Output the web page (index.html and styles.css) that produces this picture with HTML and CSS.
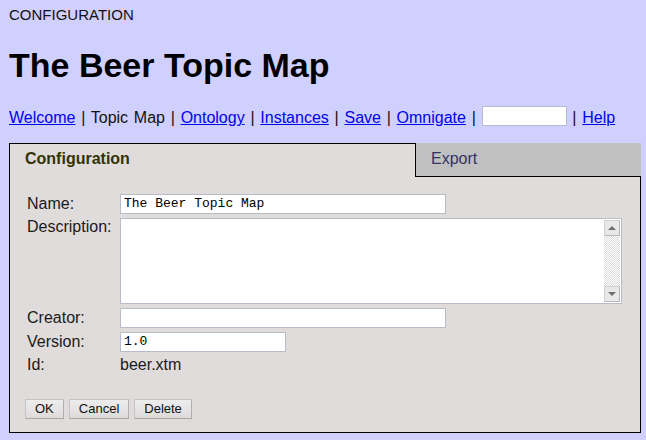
FILE: index.html
```html
<!DOCTYPE html>
<html>
<head>
<meta charset="utf-8">
<title>The Beer Topic Map - Configuration</title>
<link rel="stylesheet" href="styles.css">
</head>
<body>
<div class="page">
  <div class="crumb">CONFIGURATION</div>
  <h1 class="title">The Beer Topic Map</h1>
  <div class="nav"><a href="#">Welcome</a> | Topic Map | <a href="#">Ontology</a> | <a href="#">Instances</a> | <a href="#">Save</a> | <a href="#">Omnigate</a> | <input class="search" type="text"> | <a href="#">Help</a></div>
  <div class="panel">
    <div class="tabs">
      <div class="tab tab-active">Configuration</div>
      <div class="tab tab-inactive">Export</div>
    </div>
    <div class="panel-body">
      <div class="form">
        <label class="lbl">Name:</label>
        <input class="field field-wide" type="text" value="The Beer Topic Map">
        <label class="lbl lbl-top">Description:</label>
        <div class="textbox">
          <textarea class="textarea"></textarea>
          <div class="sbar">
            <div class="sbtn"><span class="tri tri-up"></span></div>
            <div class="strack"></div>
            <div class="sbtn"><span class="tri tri-down"></span></div>
          </div>
        </div>
        <label class="lbl">Creator:</label>
        <input class="field field-wide" type="text" value="">
        <label class="lbl">Version:</label>
        <input class="field field-short" type="text" value="1.0">
        <span class="lbl">Id:</span>
        <span class="value">beer.xtm</span>
      </div>
      <div class="buttons">
        <button class="btn" type="button">OK</button>
        <button class="btn" type="button">Cancel</button>
        <button class="btn" type="button">Delete</button>
      </div>
    </div>
  </div>
</div>
</body>
</html>
```

FILE: styles.css
```css
html, body {
  margin: 0;
  padding: 0;
  background: #d0d0ff;
}

body {
  font-family: "Liberation Sans", Arial, sans-serif;
  color: #111;
}

.page {
  padding: 6px 0 0 9px;
}

.crumb {
  font-size: 15px;
  line-height: 17px;
  color: #111;
}

.title {
  margin: 22px 0 0 0;
  font-size: 34px;
  line-height: 40px;
  font-weight: bold;
  color: #000;
}

.nav {
  margin-top: 21px;
  font-size: 16px;
  line-height: 18px;
  word-spacing: 1.3px;
  color: #111;
}

.nav a {
  color: #0000ee;
  text-decoration: underline;
}

.search {
  box-sizing: border-box;
  width: 85px;
  height: 20px;
  margin: 0;
  padding: 1px 3px;
  border: 1px solid #b7bcc8;
  background: #fff;
  font-family: "Liberation Mono", monospace;
  font-size: 13px;
  vertical-align: 3px;
  outline: none;
}

.panel {
  margin-top: 16px;
  width: 632px;
}

.tabs {
  display: flex;
  height: 34px;
}

.tab {
  box-sizing: border-box;
  height: 34px;
  padding: 6px 0 0 15px;
  font-size: 16px;
  line-height: 18px;
}

.tab-active {
  width: 407px;
  background: #e0dcdc;
  border: 1px solid #000;
  border-bottom: none;
  font-weight: bold;
  color: #333300;
}

.tab-inactive {
  flex: 1;
  background: #c0c0c0;
  border-bottom: 1px solid #000;
  padding-top: 7px;
  color: #333366;
}

.panel-body {
  background: #e0dcdc;
  border: 1px solid #000;
  border-top: none;
  padding: 17px 0 13px 15px;
}

.form {
  display: grid;
  grid-template-columns: 93px 1fr;
  row-gap: 4px;
  align-items: center;
  margin-left: 2px;
  font-size: 16px;
  line-height: 18px;
  color: #1a1a1a;
}

.lbl-top {
  align-self: start;
}

.value {
  color: #1a1a1a;
}

.field {
  box-sizing: border-box;
  height: 20px;
  margin: 0;
  padding: 1px 3px;
  border: 1px solid #b7bcc8;
  background: #fff;
  font-family: "Liberation Mono", monospace;
  font-size: 13px;
  color: #000;
  outline: none;
}

.field-wide {
  width: 326px;
}

.field-short {
  width: 166px;
}

.textbox {
  box-sizing: border-box;
  display: flex;
  width: 502px;
  height: 86px;
  border: 1px solid #b7bcc8;
  background: #fff;
  padding: 1px;
}

.textarea {
  flex: 1;
  margin: 0;
  padding: 1px 3px;
  border: none;
  resize: none;
  outline: none;
  background: #fff;
  font-family: "Liberation Mono", monospace;
  font-size: 13px;
}

.sbar {
  display: flex;
  flex-direction: column;
  width: 16px;
}

.sbtn {
  box-sizing: border-box;
  height: 16px;
  display: flex;
  align-items: center;
  justify-content: center;
  background: #e8e8e8;
  border: 1px solid #d0d0d0;
  border-right-color: #b8b8b8;
  border-bottom-color: #b8b8b8;
}

.strack {
  flex: 1;
  background-color: #fff;
  background-image: conic-gradient(#dcdcdc 25%, #fff 0 50%, #dcdcdc 0 75%, #fff 0);
  background-size: 2px 2px;
}

.tri {
  width: 0;
  height: 0;
  border-left: 4px solid transparent;
  border-right: 4px solid transparent;
}

.tri-up {
  border-bottom: 4px solid #6e6e6e;
}

.tri-down {
  border-top: 4px solid #6e6e6e;
}

.buttons {
  display: flex;
  gap: 5px;
  margin-top: 25px;
}

.btn {
  box-sizing: border-box;
  height: 20px;
  margin: 0;
  padding: 0 9px;
  font-family: "Liberation Sans", Arial, sans-serif;
  font-size: 13px;
  line-height: 16px;
  color: #111;
  background: linear-gradient(#eeeded, #dddada);
  border: 1px solid #c4c4c4;
  border-bottom-color: #a8a8a8;
  border-right-color: #b0b0b0;
  border-radius: 0;
}
```
